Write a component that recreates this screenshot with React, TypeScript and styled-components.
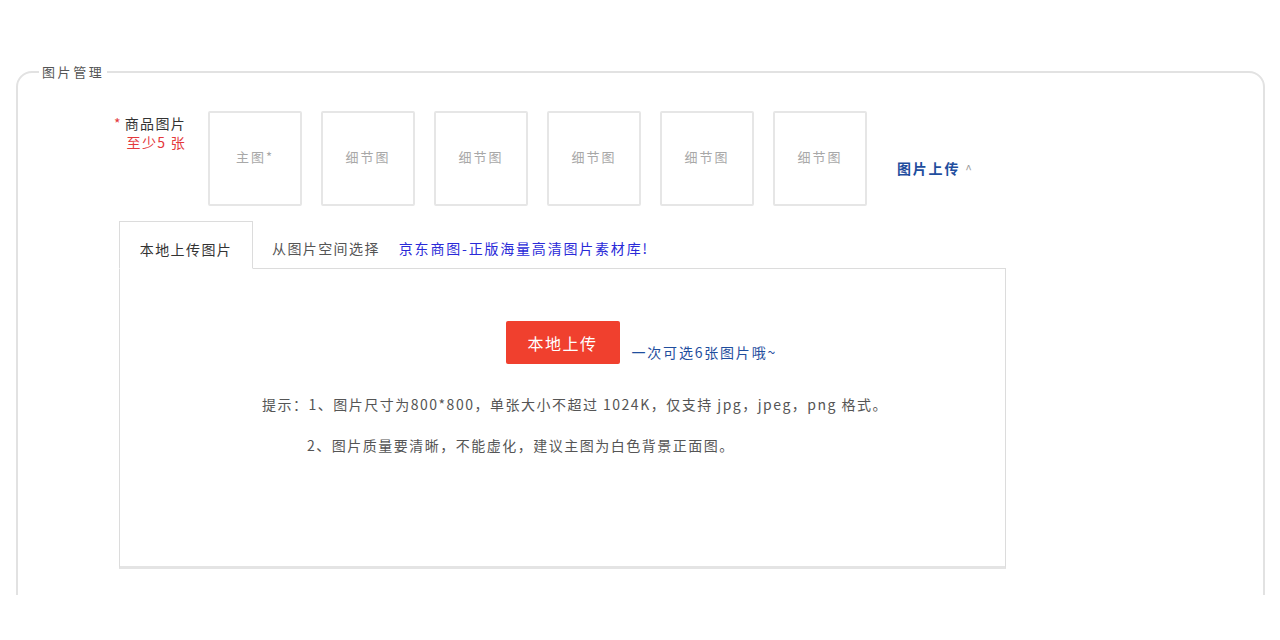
import React from 'react';
import styled, { createGlobalStyle } from 'styled-components';

const GlobalStyle = createGlobalStyle`
  body {
    margin: 0;
    background: #fff;
    font-family: "Noto Sans CJK SC", "Noto Sans", "Liberation Sans", sans-serif;
    font-size: 12px;
    color: #333;
  }
`;

const COLOR = {
  BORDER: '#e2e2e2',
  RED: '#e4393c',
  LINK: '#1f4e9e',
  BRIGHT_LINK: '#2a2ad8',
  GRAY_TEXT: '#555',
  PLACEHOLDER: '#a8a8a8',
};

const thumbs = ['主图*', '细节图', '细节图', '细节图', '细节图', '细节图'];

const App = () => {
  return (
    <>
      <GlobalStyle />
      <Page>
        <Fieldset>
          <Legend>图片管理</Legend>
          <ImageRow>
            <FieldLabel>
              <div className="title">
                <span className="star">*</span>商品图片
              </div>
              <div className="hint">至少5 张</div>
            </FieldLabel>
            <ThumbList>
              {thumbs.map((t, i) => (
                <Thumb key={i}>{t}</Thumb>
              ))}
            </ThumbList>
            <ToggleLink>
              图片上传<span className="arrow">^</span>
            </ToggleLink>
          </ImageRow>

          <UploadArea>
            <Tabs>
              <Tab $active>本地上传图片</Tab>
              <Tab>从图片空间选择</Tab>
              <Tab $link>京东商图-正版海量高清图片素材库!</Tab>
            </Tabs>
            <Panel>
              <ButtonRow>
                <UploadButton>本地上传</UploadButton>
                <ButtonNote>一次可选6张图片哦~</ButtonNote>
              </ButtonRow>
              <Tips>
                <p>提示：1、图片尺寸为800*800，单张大小不超过 1024K，仅支持 jpg，jpeg，png 格式。</p>
                <p className="indent">2、图片质量要清晰，不能虚化，建议主图为白色背景正面图。</p>
              </Tips>
            </Panel>
          </UploadArea>
        </Fieldset>
      </Page>
    </>
  );
};

const Page = styled.div`
  height: 595px;
  overflow: hidden;
  padding: 64px 15px 0 16px;
  box-sizing: border-box;
`;

const Fieldset = styled.fieldset`
  margin: 0;
  padding: 0;
  height: 640px;
  box-sizing: border-box;
  border: 2px solid ${COLOR.BORDER};
  border-radius: 16px;
  min-width: 0;
`;

const Legend = styled.legend`
  margin-left: 21px;
  padding: 0 3px;
  font-size: 13px;
  letter-spacing: 2.6px;
  line-height: 16px;
  color: ${COLOR.GRAY_TEXT};
`;

const ImageRow = styled.div`
  display: flex;
  flex-direction: row;
  align-items: flex-start;
  margin-top: 31px;
  padding-left: 90px;
`;

const FieldLabel = styled.div`
  width: 78px;
  padding-top: 3px;
  text-align: right;
  font-size: 14px;
  letter-spacing: 1.3px;
  line-height: 19px;

  .title {
    color: #333;
  }
  .star {
    color: ${COLOR.RED};
    margin-right: 3px;
  }
  .hint {
    color: ${COLOR.RED};
  }
`;

const ThumbList = styled.div`
  display: flex;
  flex-direction: row;
  gap: 19px;
  margin-left: 22px;
`;

const Thumb = styled.div`
  display: flex;
  justify-content: center;
  align-items: center;
  width: 94px;
  height: 95px;
  box-sizing: border-box;
  padding-bottom: 4px;
  border: 2px solid #e6e6e6;
  border-radius: 2px;
  color: ${COLOR.PLACEHOLDER};
  font-size: 13px;
  letter-spacing: 2px;
`;

const ToggleLink = styled.div`
  margin: 48px 0 0 30px;
  color: ${COLOR.LINK};
  font-size: 14px;
  letter-spacing: 1.8px;
  font-weight: bold;
  line-height: 18px;

  .arrow {
    margin-left: 5px;
    color: #999;
    font-weight: normal;
    font-size: 12px;
  }
`;

const UploadArea = styled.div`
  width: 887px;
  margin: 15px 0 0 101px;
`;

const Tabs = styled.div`
  display: flex;
  flex-direction: row;
  align-items: flex-end;
  gap: 19px;
  margin-bottom: -1px;
  position: relative;
  z-index: 1;
`;

const Tab = styled.div<{ $active?: boolean; $link?: boolean }>`
  font-size: 14px;
  letter-spacing: ${({ $link }) => ($link ? '1.8px' : '1.4px')};
  line-height: 16px;
  white-space: nowrap;
  color: ${({ $link }) => ($link ? COLOR.BRIGHT_LINK : COLOR.GRAY_TEXT)};
  ${({ $active }) =>
    $active
      ? `
    width: 134px;
    height: 48px;
    box-sizing: border-box;
    padding-top: 19px;
    text-align: center;
    color: #333;
    background: #fff;
    border: 1px solid #dcdcdc;
    border-bottom: 1px solid #fff;
  `
      : `
    padding-bottom: 13px;
  `}
`;

const Panel = styled.div`
  height: 301px;
  box-sizing: border-box;
  border: 1px solid #dcdcdc;
  border-bottom: 3px solid #e4e4e4;
  background: #fff;
`;

const ButtonRow = styled.div`
  display: grid;
  grid-template-columns: 1fr auto 1fr;
  margin-top: 52px;
`;

const UploadButton = styled.button`
  grid-column: 2;
  width: 114px;
  height: 43px;
  border: none;
  border-radius: 2px;
  background: #f0402e;
  color: #fff;
  font-family: inherit;
  font-size: 16px;
  letter-spacing: 1.5px;
  cursor: pointer;
`;

const ButtonNote = styled.span`
  align-self: end;
  margin: 0 0 3px 12px;
  color: ${COLOR.LINK};
  font-size: 14px;
  letter-spacing: 1.8px;
  line-height: 18px;
  white-space: nowrap;
`;

const Tips = styled.div`
  margin-top: 30px;
  padding-left: 142px;
  color: ${COLOR.GRAY_TEXT};
  font-size: 14px;
  letter-spacing: 1.5px;
  line-height: 20px;

  p {
    margin: 0 0 21px;
    white-space: nowrap;
  }
  .indent {
    padding-left: 45px;
  }
`;

export default App;
